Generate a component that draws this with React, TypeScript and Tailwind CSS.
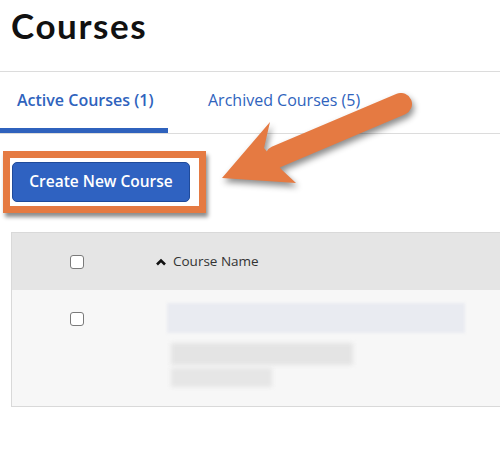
import React from 'react';

const Checkbox = () => (
  <span className="block w-[14px] h-[14px] rounded-[3px] border border-[#7a7a7a] bg-white" />
);

const Arrow = () => (
  <svg
    className="absolute left-0 top-0 pointer-events-none drop-shadow-[2px_4px_3px_rgba(0,0,0,0.45)]"
    width="500"
    height="453"
    viewBox="0 0 500 453"
  >
    <line x1="276" y1="157" x2="401" y2="104" stroke="#e57a42" strokeWidth="22" strokeLinecap="round" />
    <polygon points="222,178 270,122 264,148 282,170 296,183" fill="#e57a42" />
  </svg>
);

export default function App() {
  const tabs = [
    { label: 'Active Courses (1)', active: true },
    { label: 'Archived Courses (5)', active: false },
  ];

  return (
    <div className="relative w-[500px] h-[453px] overflow-hidden bg-white font-['Open_Sans',sans-serif]">
      <div className="h-[72px] border-b border-[#dcdcdc] pl-[11px] pt-[5px]">
        <h1 className="font-['Lato',sans-serif] font-bold text-[35px] leading-[40px] tracking-[1.6px] text-[#111]">
          Courses
        </h1>
      </div>

      <div className="flex h-[62px] border-b border-[#dcdcdc]">
        {tabs.map((tab) =>
          tab.active ? (
            <div
              key={tab.label}
              className="w-[168px] flex items-center pl-[17px] border-b-[5px] border-[#2f62bd] text-[16px] font-semibold text-[#2f63bd]"
            >
              {tab.label}
            </div>
          ) : (
            <div key={tab.label} className="flex items-center pl-[40px] pb-[5px] text-[16px] text-[#2f63bd]">
              {tab.label}
            </div>
          )
        )}
      </div>

      <div className="mt-[17px] ml-[3px] inline-block border-[7px] border-[#e57a42] bg-white pt-[4px] pl-[2px] pr-[9px] pb-[4px] shadow-[2px_4px_4px_rgba(0,0,0,0.45)]">
        <button className="block w-[178px] h-[40px] rounded-[5px] bg-[#2f62c1] border border-[#1f4a9a] text-white text-[15.5px] font-semibold">
          Create New Course
        </button>
      </div>

      <div className="mt-[19px] ml-[11px] w-[520px] border border-[#d9d9d9]">
        <div className="flex items-center h-[57px] bg-[#e5e5e5]">
          <div className="w-[130px] flex justify-center">
            <Checkbox />
          </div>
          <div className="flex items-center pl-[13px] text-[13.5px] text-[#333]">
            <svg width="12" height="8" viewBox="0 0 12 8" className="mr-[6px]">
              <polyline points="2,6.5 6,2.5 10,6.5" fill="none" stroke="#111" strokeWidth="2.6" />
            </svg>
            Course Name
          </div>
        </div>
        <div className="flex h-[116px] bg-[#f7f7f7]">
          <div className="w-[130px] flex justify-center pt-[22px]">
            <Checkbox />
          </div>
          <div className="flex flex-col pl-[25px] pt-[13px]">
            <div className="w-[298px] h-[30px] bg-[#e9ebf1] blur-[1.5px]" />
            <div className="ml-[4px] mt-[10px] w-[182px] h-[22px] bg-[#e4e4e4] blur-[2px]" />
            <div className="ml-[4px] mt-[3px] w-[101px] h-[19px] bg-[#e6e6e6] blur-[2px]" />
          </div>
        </div>
      </div>

      <Arrow />
    </div>
  );
}
